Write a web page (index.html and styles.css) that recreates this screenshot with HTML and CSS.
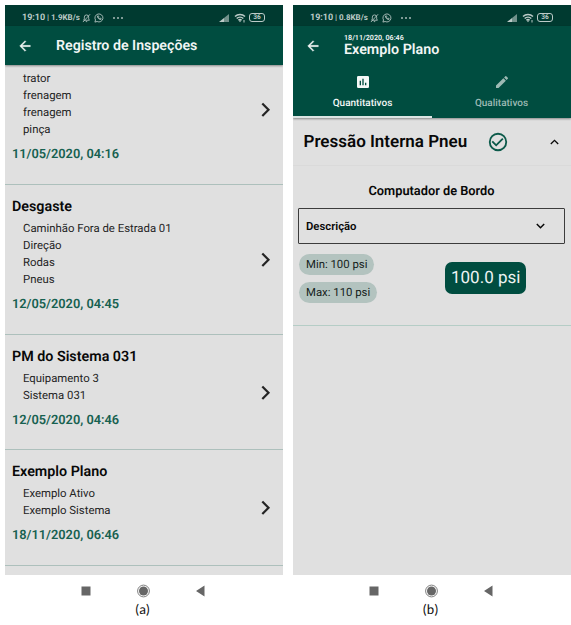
FILE: index.html
```html
<!DOCTYPE html>
<html lang="pt-BR">
<head>
<meta charset="utf-8">
<title>Registro de Inspeções</title>
<link rel="stylesheet" href="styles.css">
</head>
<body>
<svg class="defs" width="0" height="0">
  <symbol id="bell" viewBox="0 0 10 10"><path d="M2 7.5h6.2L7.4 6V4a2.4 2.4 0 0 0-4.8 0v2L1.8 7.5M4.2 9h1.6M1 9.5 9 .8" fill="none" stroke="currentColor" stroke-width=".9"/></symbol>
  <symbol id="chat" viewBox="0 0 10 10"><path d="M.9 9.1 1.5 7A4 4 0 1 1 3.100 8.500ZM3.500 3c-.3 1.700 1.500 3.600 3.300 3.600l.4-1-1.200-.6-.6.5-1-1.200.4-.6-.4-.9Z" fill="none" stroke="currentColor" stroke-width=".85"/></symbol>
  <symbol id="signal" viewBox="0 0 10 8"><path d="M0 8 5 4v4Z" fill="currentColor"/><path d="M5 4l5-4v8H5Z" fill="currentColor" opacity=".6"/></symbol>
  <symbol id="wifi" viewBox="0 0 12 10"><path d="M1 3.500a7.200 7.200 0 0 1 10 0M2.700 5.500a4.800 4.800 0 0 1 6.600 0M4.400 7.300a2.400 2.400 0 0 1 3.200 0" fill="none" stroke="currentColor" stroke-width="1.500"/><path d="M4.700 7.500h2.600L6 9.200ZM9.500 7h1v2.500h-1z" fill="currentColor"/></symbol>
  <symbol id="back" viewBox="0 0 24 24"><path d="M20 11H7.830l5.590-5.590L12 4l-8 8 8 8 1.410-1.410L7.830 13H20z" fill="currentColor" stroke="currentColor" stroke-width=".5"/></symbol>
  <symbol id="next" viewBox="0 0 10 16"><path d="m1.300 1.500 6.200 6.300-6.200 6.300" fill="none" stroke="currentColor" stroke-width="2.200"/></symbol>
  <symbol id="chart" viewBox="0 0 24 24"><path d="M19 3H5a2 2 0 0 0-2 2v14a2 2 0 0 0 2 2h14a2 2 0 0 0 2-2V5a2 2 0 0 0-2-2ZM9 17H7v-7h2Zm4 0h-2V7h2Zm4 0h-2v-4h2Z" fill="currentColor" fill-rule="evenodd"/></symbol>
  <symbol id="pencil" viewBox="0 0 24 24"><path d="M3 17.250V21h3.750L17.810 9.940l-3.750-3.750ZM20.710 7.040a1 1 0 0 0 0-1.410l-2.340-2.340a1 1 0 0 0-1.410 0l-1.830 1.830 3.750 3.750Z" fill="currentColor"/></symbol>
  <symbol id="check" viewBox="0 0 24 24"><path d="M16.590 7.580 10 14.170l-3.590-3.580L5 12l5 5 8-8ZM12 2a10 10 0 1 0 0 20 10 10 0 0 0 0-20Zm0 18a8 8 0 1 1 0-16 8 8 0 0 1 0 16Z" fill="currentColor" fill-rule="evenodd"/></symbol>
  <symbol id="up" viewBox="0 0 9 6"><path d="M.8 5 4.500 1.300 8.200 5" fill="none" stroke="currentColor" stroke-width="1.300"/></symbol>
  <symbol id="down" viewBox="0 0 9 6"><path d="M.8 1 4.500 4.700 8.200 1" fill="none" stroke="currentColor" stroke-width="1.500"/></symbol>
  <symbol id="nav" viewBox="0 0 124 14"><path d="M.5 2.500h9v9h-9zM123.500 1.500v11L115 7z" fill="#666"/><circle cx="62.500" cy="7" r="5.900" fill="none" stroke="#808080"/><circle cx="62.500" cy="7" r="4.500" fill="#666"/></symbol>
</svg>
<main class="figure">
  <section class="phone">
    <div class="screen">
      <div class="status">
        <span class="clock">19:10</span><span class="net">| 1.9KB/s</span><svg class="i-bell"><use href="#bell"/></svg><svg class="i-chat"><use href="#chat"/></svg><span class="dots"><i></i><i></i><i></i></span>
        <svg class="i-signal"><use href="#signal"/></svg><svg class="i-wifi"><use href="#wifi"/></svg><span class="battery">36</span>
      </div>
      <header class="bar">
        <svg class="i-back"><use href="#back"/></svg>
        <h1 class="bar-title">Registro de Inspeções</h1>
      </header>
      <div class="list">
        <article class="item first">
          <div><ul><li>trator</li><li>frenagem</li><li>frenagem</li><li>pinça</li></ul><time>11/05/2020, 04:16</time></div>
          <svg class="i-next"><use href="#next"/></svg>
        </article>
        <article class="item">
          <div><h2>Desgaste</h2><ul><li>Caminhão Fora de Estrada 01</li><li>Direção</li><li>Rodas</li><li>Pneus</li></ul><time>12/05/2020, 04:45</time></div>
          <svg class="i-next"><use href="#next"/></svg>
        </article>
        <article class="item short">
          <div><h2>PM do Sistema 031</h2><ul><li>Equipamento 3</li><li>Sistema 031</li></ul><time>12/05/2020, 04:46</time></div>
          <svg class="i-next"><use href="#next"/></svg>
        </article>
        <article class="item">
          <div><h2>Exemplo Plano</h2><ul><li>Exemplo Ativo</li><li>Exemplo Sistema</li></ul><time>18/11/2020, 06:46</time></div>
          <svg class="i-next"><use href="#next"/></svg>
        </article>
      </div>
    </div>
    <svg class="nav"><use href="#nav"/></svg>
    <p class="caption">(a)</p>
  </section>
  <section class="phone">
    <div class="screen">
      <div class="status">
        <span class="clock">19:10</span><span class="net">| 0.8KB/s</span><svg class="i-bell"><use href="#bell"/></svg><svg class="i-chat"><use href="#chat"/></svg><span class="dots"><i></i><i></i><i></i></span>
        <svg class="i-signal"><use href="#signal"/></svg><svg class="i-wifi"><use href="#wifi"/></svg><span class="battery">36</span>
      </div>
      <header class="plan-head">
        <div class="bar plan-bar">
          <svg class="i-back"><use href="#back"/></svg>
          <div><p class="stamp">18/11/2020, 06:46</p><h1 class="plan-title">Exemplo Plano</h1></div>
        </div>
        <nav class="tabs">
          <div class="tab active"><svg class="i-tab"><use href="#chart"/></svg><span>Quantitativos</span></div>
          <div class="tab"><svg class="i-tab"><use href="#pencil"/></svg><span>Qualitativos</span></div>
        </nav>
      </header>
      <div class="group">
        <h2 class="group-title">Pressão Interna Pneu</h2>
        <svg class="i-check"><use href="#check"/></svg>
        <svg class="i-up"><use href="#up"/></svg>
      </div>
      <div class="measure">
        <h3 class="device">Computador de Bordo</h3>
        <div class="select"><span>Descrição</span><svg class="i-down"><use href="#down"/></svg></div>
        <div class="reading">
          <div class="limits"><span class="chip">Min: 100 psi</span><span class="chip">Max: 110 psi</span></div>
          <span class="value">100.0 psi</span>
        </div>
      </div>
    </div>
    <svg class="nav"><use href="#nav"/></svg>
    <p class="caption">(b)</p>
  </section>
</main>
</body>
</html>
```
FILE: styles.css
```css
* { box-sizing: border-box; margin: 0; padding: 0; }
body { width: 571px; height: 625px; overflow: hidden; background: #fff; font-family: Roboto, "Liberation Sans", sans-serif; color: #080808; text-rendering: geometricPrecision; }
svg { display: block; flex: none; }
.defs { position: absolute; }
.figure { display: flex; gap: 10px; padding: 5px 0 0 5px; }
.phone { width: 278px; flex: none; }
.screen { height: 570px; background: #e0e0e0; overflow: hidden; }

.status { height: 21px; display: flex; align-items: center; padding: 4px 16px 0 17px; background: #003a30; color: #bccbc8; }
.clock { width: 25px; font-size: 9px; font-weight: 700; }
.net { width: 35px; font-size: 8px; font-weight: 700; white-space: nowrap; }
.i-bell { width: 9px; height: 10px; }
.i-chat { width: 10px; height: 10px; margin-left: 3px; }
.dots { display: flex; gap: 2px; margin: 0 auto 0 9px; }
.dots i { width: 2px; height: 2px; border-radius: 50%; background: #a9bbb7; }
.i-signal { width: 10px; height: 8px; }
.i-wifi { width: 12px; height: 10px; margin-left: 5px; }
.battery { width: 16px; height: 9px; margin: 0 2px 0 3px; border: 1px solid currentColor; border-radius: 3px; font-size: 6.500px; line-height: 7px; font-weight: 700; text-align: center; }

.bar { height: 39px; display: flex; align-items: center; padding-left: 12px; background: #004d40; color: #f2f6f5; }
.bar:not(.plan-bar) { padding-top: 1px; box-shadow: 0 1px 2px rgba(0, 0, 0, .4); }
.i-back { width: 16px; height: 16px; margin-right: 23px; }
.bar-title { font-size: 14.200px; line-height: 20px; font-weight: 600; }

.item { display: flex; align-items: center; justify-content: space-between; padding: 11px 12px 19px 7px; border-bottom: 1px solid #adc0bc; }
.item.first { padding-top: 5px; }
.item h2 { font-size: 14.300px; line-height: 22px; font-weight: 600; margin-bottom: 2px; }
.item ul { list-style: none; padding-left: 11px; }
.item li { font-size: 11.350px; line-height: 17px; color: #242424; }
.item time { display: block; margin-top: 7px; font-size: 12.800px; line-height: 20px; font-weight: 600; color: #176150; }
.item.short { padding-bottom: 18px; }
.i-next { width: 10px; height: 16px; color: #242424; position: relative; top: 4px; }
.first .i-next { top: -8px; }

.plan-head { height: 92px; background: #004d40; box-shadow: 0 1px 2px rgba(0, 0, 0, .4); }
.stamp { font-size: 7.150px; line-height: 9px; font-weight: 600; }
.plan-title { font-size: 14.300px; line-height: 17px; font-weight: 600; }
.tabs { display: flex; height: 53px; }
.tab { flex: 1; display: flex; flex-direction: column; align-items: center; padding-top: 9px; font-size: 10px; line-height: 12px; font-weight: 500; color: #9dbab4; border-bottom: 2px solid transparent; }
.tab.active { color: #f4f8f7; border-bottom-color: #dce5e3; }
.i-tab { width: 16px; height: 16px; margin-bottom: 8px; }

.group { height: 48px; display: flex; align-items: center; padding: 1px 12px 0 10.500px; border-bottom: 1px solid #dadada; }
.group-title { width: 183.500px; font-size: 17px; font-weight: 600; white-space: nowrap; }
.i-check { width: 22px; height: 22px; color: #0c5a4a; margin-right: auto; }
.i-up { width: 9px; height: 6px; }
.measure { height: 160px; padding: 17px 6px 0 5px; border-bottom: 1px solid #b5cdc6; }
.device { text-align: center; font-size: 12.800px; line-height: 17px; font-weight: 600; }
.select { height: 36px; margin-top: 8px; display: flex; align-items: center; justify-content: space-between; padding: 0 19px 0 7px; border: 1px solid #3c3c3c; border-radius: 1px; font-size: 11.300px; font-weight: 600; }
.i-down { width: 9px; height: 6px; }
.reading { display: flex; padding-top: 10px; }
.limits { width: 146px; margin-left: 1px; display: flex; flex-direction: column; align-items: flex-start; gap: 7px; }
.chip { height: 21px; padding: 0 7px; border-radius: 11px; background: #b3c3bf; font-size: 11.350px; line-height: 21px; color: #151d1b; }
.value { height: 32px; margin-top: 8px; padding: 0 6px; border-radius: 7px; background: #004d40; color: #edf3f2; font-size: 17px; line-height: 32px; white-space: nowrap; }

.nav { width: 124px; height: 14px; margin: 9px 0 0 76px; }
.caption { margin-top: 3px; padding-right: 3px; text-align: center; font: 14px/18px Carlito, Lato, sans-serif; color: #111; }
```
